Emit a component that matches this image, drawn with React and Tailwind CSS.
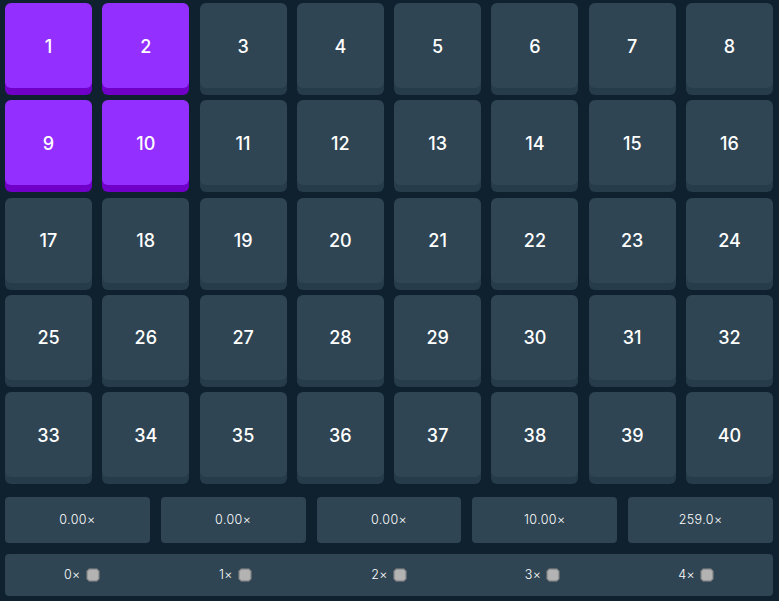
import React from "react";

const selected = new Set([1, 2, 9, 10]);
const mults = ["0.00×", "0.00×", "0.00×", "10.00×", "259.0×"];

function Gem() {
  return (
    <svg width="14" height="14" viewBox="0 0 14 14" className="ml-[5px]">
      <path d="M3 0.5 H11 L13.5 3 V11 L11 13.5 H3 L0.5 11 V3 Z" fill="#8d8d8d" />
      <path d="M3.5 1.8 H10.5 L12.2 3.5 V10.5 L10.5 12.2 H3.5 L1.8 10.5 V3.5 Z" fill="#b3b3b3" />
    </svg>
  );
}

export default function App() {
  const tiles = Array.from({ length: 40 }, (_, i) => i + 1);
  return (
    <div
      className="w-[779px] h-[601px] bg-[#0f212e] pl-[5px] pr-[6px] pt-[3px]"
      style={{ fontFamily: "Inter, 'Noto Sans', sans-serif" }}
    >
      <div className="grid grid-cols-8 gap-x-[10.3px] gap-y-[12.3px]">
        {tiles.map((n) => {
          const sel = selected.has(n);
          return (
            <div
              key={n}
              className={
                "h-[85px] rounded-[6px] flex items-center justify-center text-white text-[18px] font-medium pt-[1px] " +
                (sel
                  ? "bg-[#9430ff] shadow-[0_7px_0_#7000c8]"
                  : "bg-[#2f4553] shadow-[0_7px_0_#263c4a]")
              }
            >
              {n}
            </div>
          );
        })}
      </div>
      <div className="grid grid-cols-5 gap-x-[11px] mt-[20px]">
        {mults.map((m, i) => (
          <div
            key={i}
            className="h-[46px] rounded-[4px] bg-[#2f4553] flex items-center justify-center text-white text-[12.5px] font-light tracking-[0.4px]"
          >
            {m}
          </div>
        ))}
      </div>
      <div className="mt-[11px] h-[42px] rounded-[4px] bg-[#2f4553] grid grid-cols-5">
        {[0, 1, 2, 3, 4].map((n) => (
          <div key={n} className="flex items-center justify-center text-white text-[12.5px] font-light tracking-[0.4px]">
            <span>{n}×</span>
            <Gem />
          </div>
        ))}
      </div>
    </div>
  );
}
